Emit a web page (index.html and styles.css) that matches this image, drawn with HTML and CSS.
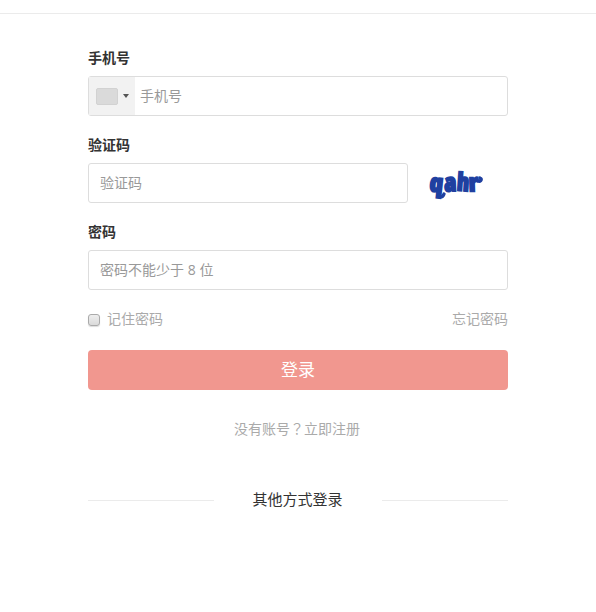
FILE: index.html
```html
<!DOCTYPE html>
<html lang="zh-CN">
<head>
<meta charset="utf-8">
<title>登录</title>
<link rel="stylesheet" href="styles.css">
</head>
<body>
<header class="topbar"></header>
<main class="login">
  <label class="label">手机号</label>
  <div class="field phone">
    <div class="country"><span class="flag"></span><span class="caret"></span></div>
    <span class="placeholder">手机号</span>
  </div>
  <label class="label">验证码</label>
  <div class="captcha-row">
    <div class="field code"><span class="placeholder">验证码</span></div>
    <svg class="captcha" width="100" height="40" viewBox="0 0 100 40">
      <g class="letters">
        <text transform="translate(21 28) rotate(6) scale(1.02 1)">q</text>
        <text transform="translate(36.5 28.5) rotate(-2) scale(.98 1)">a</text>
        <text transform="translate(48.5 27.5) rotate(4) scale(.92 1)">h</text>
        <text transform="translate(61 28.5) rotate(-2) scale(1 1)">r</text>
      </g>
      <path class="curls" d="M31.5 29c-1 6 3 6 4.5 2M69 17c3 3 6-1 3-2"/>
    </svg>
  </div>
  <label class="label">密码</label>
  <div class="field"><span class="placeholder">密码不能少于 <span class="digit">8</span> 位</span></div>
  <div class="options">
    <span class="remember"><span class="check"></span>记住密码</span>
    <span>忘记密码</span>
  </div>
  <div class="submit">登录</div>
  <p class="register">没有账号<span class="mark" lang="zh-TW">？</span>立即注册</p>
  <div class="divider"><span>其他方式登录</span></div>
</main>
</body>
</html>
```

FILE: styles.css
```css
* { box-sizing: border-box; }
body {
  margin: 0;
  background: #fff;
  color: #333;
  font: 14px/20px "Noto Sans CJK SC", sans-serif;
}
.topbar { height: 14px; border-bottom: 1px solid #ebebeb; }
.login { width: 420px; margin: 33px auto 0; }
.label { display: block; height: 20px; margin-bottom: 9px; font-weight: 700; }
.field {
  display: flex;
  align-items: center;
  height: 40px;
  margin-bottom: 18px;
  padding-left: 11px;
  border: 1px solid #ddd;
  border-radius: 3px;
  color: #999;
}
.placeholder { padding-bottom: 2px; }
.digit { font-family: "Open Sans", sans-serif; line-height: 1; margin: 0 .6px; }
.phone { padding-left: 0; }
.country {
  display: flex;
  align-items: center;
  width: 46px;
  height: 38px;
  margin-right: 5px;
  padding-left: 7px;
  gap: 5px;
  background: #f2f2f2;
}
.flag { width: 22px; height: 17px; background: #dadada; border: 1px solid #d2d2d2; border-radius: 2px; }
.caret { border: 3px solid transparent; border-top: 4px solid #555; border-bottom: 0; }
.captcha-row { display: flex; height: 40px; margin-bottom: 18px; }
.code { width: 320px; }
.letters { fill: #2040a0; stroke: #2040a0; stroke-width: 1.7px; font: 800 25px "Open Sans", sans-serif; font-stretch: 75%; }
.curls { fill: none; stroke: #2040a0; stroke-width: 3.4px; stroke-linecap: round; }
.options { display: flex; justify-content: space-between; height: 20px; color: #aaa; }
.remember { display: flex; align-items: center; gap: 7px; }
.check {
  width: 12px;
  height: 12px;
  margin-top: 3px;
  border: 1px solid #aaa;
  border-radius: 3px;
  background: linear-gradient(#eee, #dadada);
  box-shadow: 0 1px 1px #ddd;
}
.submit {
  height: 40px;
  margin-top: 22px;
  border-radius: 4px;
  background: #f1978f;
  color: #fff;
  font-size: 17px;
  line-height: 37px;
  text-align: center;
}
.register { margin: 28px 0 0; padding-right: 2px; color: #aaa; text-align: center; }
.mark { font-family: "Noto Sans CJK TC", sans-serif; }
.divider { display: flex; align-items: center; height: 22px; margin-top: 51px; font-size: 15px; }
.divider::before, .divider::after { content: ""; width: 126px; height: 1px; background: #ebebeb; }
.divider span { flex: 1; padding: 0 1px 2px 0; text-align: center; }
```
